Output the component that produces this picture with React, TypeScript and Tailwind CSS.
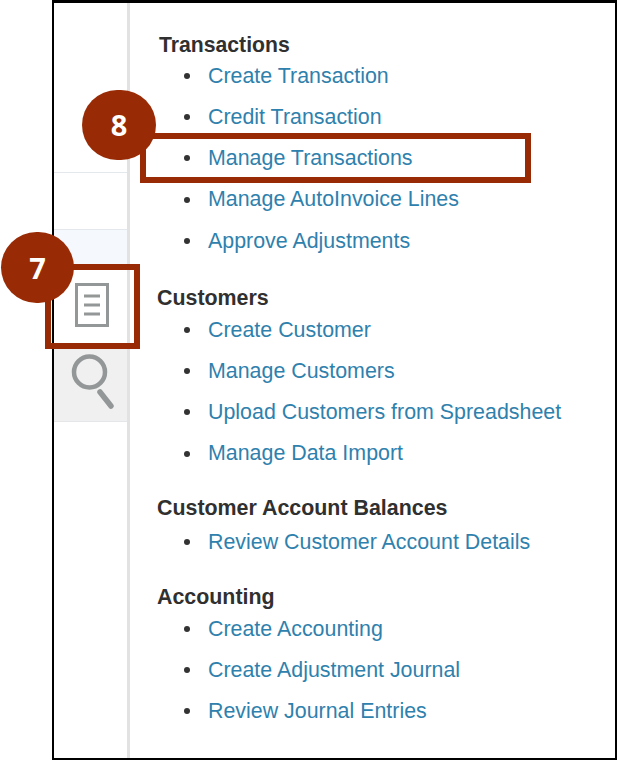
const sections = [
  { title: "Transactions", cls: "pt-[32px] pl-[28px]", head: "h-[20px] ml-[1px] text-[21.200px]", items: ["Create Transaction", "Credit Transaction", "Manage Transactions", "Manage AutoInvoice Lines", "Approve Adjustments"] },
  { title: "Customers", cls: "pt-[25.500px] pl-[28px]", head: "h-[22px] -ml-[1px] text-[21.400px]", items: ["Create Customer", "Manage Customers", "Upload Customers from Spreadsheet", "Manage Data Import"] },
  { title: "Customer Account Balances", cls: "pt-[20px] pl-[28px]", head: "h-[27px] -ml-[1px] text-[21.400px]", items: ["Review Customer Account Details"] },
  { title: "Accounting", cls: "pt-[23.500px] pl-[28px]", head: "h-[22px] -ml-[1px] text-[21.400px]", items: ["Create Accounting", "Create Adjustment Journal", "Review Journal Entries"] },
];

function Section({ title, cls, head, items }: { title: string; cls: string; head: string; items: string[] }) {
  return (
    <section className={cls}>
      <h2 className={`flex items-center font-bold text-[#303030] ${head}`}>{title}</h2>
      <ul>
        {items.map((item) => (
          <li key={item} className="flex h-[41.300px] items-center text-[21.400px] text-[#2f81ad]">
            <span className="ml-[26px] mr-[18px] h-[6px] w-[6px] rounded-full bg-[#333333]" />
            {item}
          </li>
        ))}
      </ul>
    </section>
  );
}

function Marker({ n, cls }: { n: string; cls: string }) {
  return (
    <div className={`absolute flex items-center justify-center rounded-full bg-[#982b05] font-['Open_Sans',sans-serif] text-[29px] font-bold text-white ${cls}`}>
      {n}
    </div>
  );
}

export default function App() {
  return (
    <div className="relative h-[761px] w-[618px] bg-white font-['Liberation_Sans',Arial,sans-serif]">
      <div className="ml-[52px] flex h-[760px] w-[565px] border-x-[2px] border-t-[3px] border-b-[2px] border-black">
        <aside className="flex w-[76px] shrink-0 flex-col border-r-[3px] border-[#e2e2e2]">
          <div className="h-[169px] shrink-0" />
          <div className="h-[58px] shrink-0 border-y-[1px] border-[#e4e8ec]" />
          <div className="h-[35px] shrink-0 bg-[#f5f8fc]" />
          <div className="flex h-[84px] shrink-0 justify-center">
            <svg width="34" height="45" viewBox="0 0 34 45" fill="none" stroke="#949798" strokeWidth="3" className="ml-[2px] mt-[18px]">
              <rect x="1.500" y="1.500" width="31" height="41" />
              <path d="M9 13h16M9 22h16M9 31h16" />
            </svg>
          </div>
          <div className="flex h-[73px] shrink-0 justify-center border-b-[1px] border-[#e4e6e8] bg-[#f0f0f0]">
            <svg width="46" height="60" viewBox="0 0 46 60" fill="none" stroke="#949798" className="mt-[3px]">
              <circle cx="21.500" cy="20" r="15.500" strokeWidth="4.500" />
              <path d="M32 40 L43 54" strokeWidth="5.500" strokeLinecap="round" />
            </svg>
          </div>
        </aside>
        <main className="min-w-0 flex-1">
          {sections.map((s) => (
            <Section key={s.title} {...s} />
          ))}
        </main>
      </div>
      <div className="absolute left-[140px] top-[133px] h-[50px] w-[391px] border-[6px] border-[#982b05]" />
      <div className="absolute left-[45px] top-[264px] h-[85px] w-[95px] border-[6px] border-[#982b05]" />
      <Marker n="8" cls="left-[82px] top-[90px] h-[70px] w-[74px]" />
      <Marker n="7" cls="left-[1px] top-[232px] h-[71px] w-[73px]" />
    </div>
  );
}
